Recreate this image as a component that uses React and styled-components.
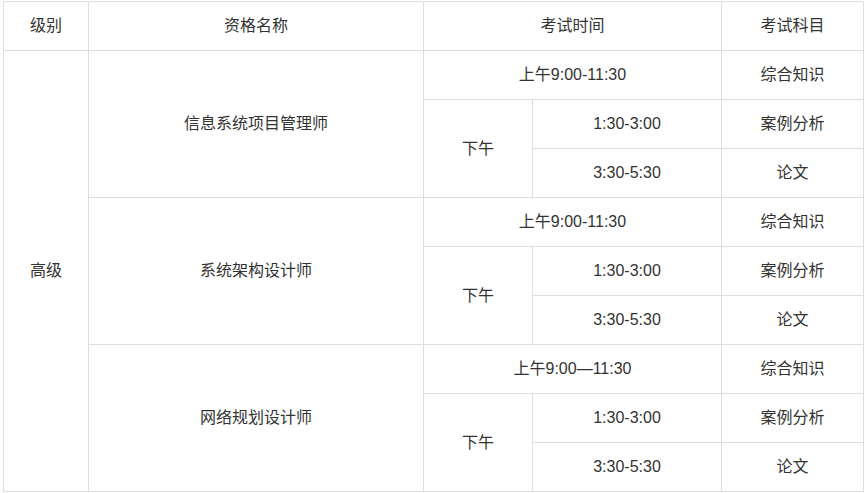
import styled, { createGlobalStyle } from 'styled-components'

const GlobalStyle = createGlobalStyle`
  html, body {
    margin: 0;
    padding: 0;
    background: #fff;
  }
  body {
    padding: 1px 0 0 3px;
    font-family: "Liberation Sans", "Noto Sans CJK SC", sans-serif;
    color: #333;
  }
`

const Table = styled.table`
  border-collapse: collapse;
  table-layout: fixed;
  width: 860px;
  font-size: 16px;
`

const Cell = styled.td`
  border: 1px solid #dedede;
  height: 48px;
  padding: 0;
  text-align: center;
  vertical-align: middle;
  line-height: 20px;
`

const HeadCell = styled(Cell).attrs({ as: 'th' })`
  font-weight: normal;
`

const schedules = [
  { name: '信息系统项目管理师', morning: '上午9:00-11:30' },
  { name: '系统架构设计师', morning: '上午9:00-11:30' },
  { name: '网络规划设计师', morning: '上午9:00—11:30' },
]

const ExamTable = () => (
  <Table>
    <colgroup>
      <col style={{ width: 85 }} />
      <col style={{ width: 335 }} />
      <col style={{ width: 109 }} />
      <col style={{ width: 189 }} />
      <col style={{ width: 142 }} />
    </colgroup>
    <thead>
      <tr>
        <HeadCell>级别</HeadCell>
        <HeadCell>资格名称</HeadCell>
        <HeadCell colSpan={2}>考试时间</HeadCell>
        <HeadCell>考试科目</HeadCell>
      </tr>
    </thead>
    <tbody>
      {schedules.map((s, i) => [
        <tr key={`${i}a`}>
          {i === 0 && <Cell rowSpan={9}>高级</Cell>}
          <Cell rowSpan={3}>{s.name}</Cell>
          <Cell colSpan={2}>{s.morning}</Cell>
          <Cell>综合知识</Cell>
        </tr>,
        <tr key={`${i}b`}>
          <Cell rowSpan={2}>下午</Cell>
          <Cell>1:30-3:00</Cell>
          <Cell>案例分析</Cell>
        </tr>,
        <tr key={`${i}c`}>
          <Cell>3:30-5:30</Cell>
          <Cell>论文</Cell>
        </tr>,
      ])}
    </tbody>
  </Table>
)

export default function App() {
  return (
    <>
      <GlobalStyle />
      <ExamTable />
    </>
  )
}
